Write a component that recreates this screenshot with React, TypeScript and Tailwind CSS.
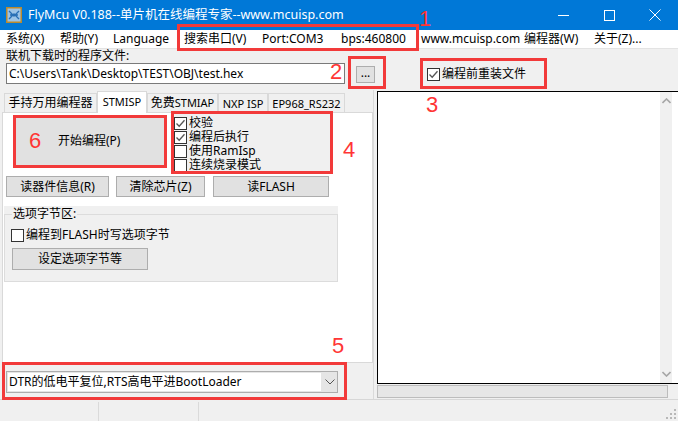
import React from 'react';

const font = "font-['Noto_Sans','Noto_Sans_CJK_SC',sans-serif]";
const btn = 'flex items-center justify-center bg-[#e1e1e1] border border-[#adadad] text-[12px] text-black leading-none';

function Check({ checked, label }: { checked?: boolean; label: React.ReactNode }) {
  return (
    <div className="flex items-center h-[14px] text-[12px] leading-[14px] text-black">
      <span className="w-[13px] h-[13px] bg-white border border-[#333] flex items-center justify-center shrink-0">
        {checked && (
          <svg width="11" height="11" viewBox="0 0 11 11">
            <path d="M1.5 5.5 L4.2 8.3 L9.5 2.2" fill="none" stroke="#555" strokeWidth="1.3" />
          </svg>
        )}
      </span>
      <span className="ml-[2px] h-[14px] leading-[14px]">{label}</span>
    </div>
  );
}

function Mark({ n, cls }: { n: string; cls: string }) {
  return <span className={`absolute font-['Liberation_Sans',sans-serif] text-[22px] leading-none text-[#ff3535] ${cls}`}>{n}</span>;
}

function Box({ cls }: { cls: string }) {
  return <div className={`absolute border-[3px] border-[#f23a3a] pointer-events-none ${cls}`} />;
}

const menu = [
  { t: '系统(X)', w: 'w-[54px]' },
  { t: '帮助(Y)', w: 'w-[53px]' },
  { t: 'Language', w: 'w-[71px]' },
  { t: '搜索串口(V)', w: 'w-[78px]' },
  { t: 'Port:COM3', w: 'w-[79px]' },
  { t: 'bps:460800', w: 'w-[80px]' },
  { t: 'www.mcuisp.com', w: 'w-[103px]' },
  { t: '编程器(W)', w: 'w-[70px]' },
  { t: '关于(Z)...', w: 'w-[80px]' },
];

const lat = 'text-[11px]';

const tabs = [
  { k: 'a', t: <span>手持万用编程器</span>, w: 'w-[93px]' },
  { k: 'b', t: <span className={lat}>STMISP</span>, w: 'w-[50px]', active: true },
  { k: 'c', t: <span>免费<span className={lat}>STMIAP</span></span>, w: 'w-[71px]' },
  { k: 'd', t: <span className={lat}>NXP ISP</span>, w: 'w-[50px]' },
  { k: 'e', t: <span className={lat}>EP968_RS232</span>, w: 'w-[77px]' },
];

export default function App() {
  return (
    <div className={`relative w-[678px] h-[421px] overflow-hidden bg-[#f0f0f0] flex flex-col ${font}`}>
      {/* title bar */}
      <div className="h-[30px] bg-[#0078d7] flex items-center text-white shrink-0">
        <svg className="ml-[6px]" width="16" height="16" viewBox="0 0 16 16">
          <rect x="0.75" y="0.75" width="14.5" height="14.5" fill="#9cc3e6" stroke="#b98a2e" strokeWidth="1.5" />
          <path d="M3 4 L8 9 L13 4 M3 12 L8 7 L13 12 M4 8 H12" fill="none" stroke="#2a6fb5" strokeWidth="1.3" />
        </svg>
        <span className="ml-[6px] text-[12.5px] leading-none">FlyMcu V0.188--单片机在线编程专家--www.mcuisp.com</span>
        <div className="ml-auto flex h-full">
          <div className="w-[46px] h-full flex items-center justify-center">
            <div className="w-[11px] h-px bg-white" />
          </div>
          <div className="w-[46px] h-full flex items-center justify-center">
            <div className="w-[11px] h-[11px] border border-white" />
          </div>
          <div className="w-[46px] h-full flex items-center justify-center">
            <svg width="12" height="12" viewBox="0 0 12 12">
              <path d="M0.5 0.5 L11.5 11.5 M11.5 0.5 L0.5 11.5" stroke="white" strokeWidth="1" />
            </svg>
          </div>
        </div>
      </div>

      {/* menu bar */}
      <div className="h-[18px] bg-white flex items-center text-[12px] leading-none text-black shrink-0">
        <div className="w-[6px]" />
        {menu.map(m => (
          <span key={m.t} className={`${m.w} whitespace-nowrap`}>{m.t}</span>
        ))}
      </div>
      <div className="h-px bg-[#e3e3e3] shrink-0" />

      {/* file row */}
      <div className="h-[41px] flex shrink-0">
        <div className="w-[377px] pl-[6px]">
          <div className="h-[14px] text-[12px] leading-[14px] text-black">联机下载时的程序文件:</div>
          <div className="flex">
            <div className="w-[339px] h-[21px] bg-white border border-[#7a7a7a] flex items-center pl-[2px] text-[12px] leading-none text-black">
              C:\Users\Tank\Desktop\TEST\OBJ\test.hex
            </div>
            <div className={`${btn} ml-[11px] mt-[3px] w-[19px] h-[17px] items-end pb-[3px]`}>...</div>
          </div>
        </div>
        <div className="pl-[50px] pt-[18px]">
          <Check checked label="编程前重装文件" />
        </div>
      </div>

      {/* main */}
      <div className="flex h-[309px] shrink-0">
        <div className="w-[373px] pl-[2px] flex flex-col">
          <div className="flex h-[22px] items-end pl-[2px]">
            {tabs.map(t => (
              <div
                key={t.k}
                className={`${t.w} flex items-center justify-center text-[12px] leading-none text-black border border-[#d9d9d9] border-b-0 whitespace-nowrap ${t.active ? 'h-[22px] bg-white relative z-10 -mb-px pb-[3px]' : 'h-[19px] bg-[#f0f0f0]'}`}
              >
                {t.t}
              </div>
            ))}
          </div>
          <div className="w-[371px] h-[251px] bg-white border border-[#d9d9d9] flex flex-col">
            <div className="flex h-[60px]">
              <div className={`${btn} justify-start ml-[11px] mt-[3px] w-[151px] h-[50px] pl-[43px]`}>开始编程(P)</div>
              <div className="ml-[7px] mt-[1px] w-[158px] h-[59px] bg-[#f0f0f0] pl-[2px] pt-[2px] flex flex-col">
                <Check checked label="校验" />
                <Check checked label="编程后执行" />
                <Check label="使用RamIsp" />
                <Check label="连续烧录模式" />
              </div>
            </div>
            <div className="flex mt-[3px] h-[21px]">
              <div className={`${btn} ml-[3px] w-[103px]`}>读器件信息(R)</div>
              <div className={`${btn} ml-[7px] w-[89px]`}>清除芯片(Z)</div>
              <div className={`${btn} ml-[8px] w-[116px]`}>读FLASH</div>
            </div>
            <div className="ml-px mt-[9px] w-[334px] h-[76px] bg-[#f0f0f0] pt-px">
              <fieldset className="h-[75px] border border-[#dcdcdc] px-[6px]">
                <legend className="text-[12px] leading-[14px] text-black px-px ml-px">选项字节区:</legend>
                <div className="mt-[7px]">
                  <Check label="编程到FLASH时写选项字节" />
                </div>
                <div className={`${btn} mt-[6px] ml-px w-[136px] h-[22px]`}>设定选项字节等</div>
              </fieldset>
            </div>
          </div>
          <div className="mt-[8px] ml-[4px] w-[332px] h-[22px] border border-[#adadad] bg-[#e5e5e5] flex items-center">
            <div className="ml-px w-[313px] h-[18px] bg-white flex items-center pl-[1px] text-[12px] leading-none text-black whitespace-nowrap">
              DTR的低电平复位,RTS高电平进BootLoader
            </div>
            <svg className="ml-[4px]" width="10" height="6" viewBox="0 0 10 6">
              <path d="M0.5 0.5 L5 5 L9.5 0.5" fill="none" stroke="#555" strokeWidth="1" />
            </svg>
          </div>
        </div>
        <div className="w-[4px] border-l border-[#dadada]" />
        <div className="flex-1 flex flex-col">
          <div className="mt-[1px] h-[293px] bg-white border border-r-0 border-black flex justify-end pr-[6px]">
            <div className="w-[12px] h-full bg-[#f0f0f0] flex flex-col items-center justify-between py-[6px]">
              <svg width="9" height="6" viewBox="0 0 9 6">
                <path d="M0.5 5 L4.5 1 L8.5 5" fill="none" stroke="#a6a6a6" strokeWidth="1.6" />
              </svg>
              <svg width="9" height="6" viewBox="0 0 9 6">
                <path d="M0.5 1 L4.5 5 L8.5 1" fill="none" stroke="#a6a6a6" strokeWidth="1.6" />
              </svg>
            </div>
          </div>
          <div className="mt-[1px] w-[291px] h-[13px] bg-[#e6e6e6] border border-[#bcbcbc]" />
        </div>
      </div>

      {/* status bar */}
      <div className="flex-1 border-t border-[#d7d7d7] flex relative">
        <div className="w-[99px] border-r border-[#dadada] mt-[2px]" />
        <div className="w-[100px] border-r border-[#dadada] mt-[2px]" />
        <svg className="absolute right-[1px] bottom-[1px]" width="11" height="11" viewBox="0 0 11 11">
          <g fill="#b8b8b8">
            <rect x="8" y="0" width="2" height="2" />
            <rect x="4" y="4" width="2" height="2" />
            <rect x="8" y="4" width="2" height="2" />
            <rect x="0" y="8" width="2" height="2" />
            <rect x="4" y="8" width="2" height="2" />
            <rect x="8" y="8" width="2" height="2" />
          </g>
        </svg>
      </div>

      {/* annotations */}
      <Box cls="left-[177px] top-[24px] w-[242px] h-[27px]" />
      <Box cls="left-[348px] top-[56px] w-[38px] h-[33px]" />
      <Box cls="left-[420px] top-[58px] w-[127px] h-[31px]" />
      <Box cls="left-[171px] top-[111px] w-[162px] h-[63px]" />
      <Box cls="left-[2px] top-[362px] w-[345px] h-[38px]" />
      <Box cls="left-[13px] top-[115px] w-[154px] h-[53px]" />
      <Mark n="1" cls="left-[419px] top-[8px]" />
      <Mark n="2" cls="left-[330px] top-[61px]" />
      <Mark n="3" cls="left-[426px] top-[94px]" />
      <Mark n="4" cls="left-[343px] top-[139px]" />
      <Mark n="5" cls="left-[332px] top-[335px]" />
      <Mark n="6" cls="left-[29px] top-[130px]" />
    </div>
  );
}
